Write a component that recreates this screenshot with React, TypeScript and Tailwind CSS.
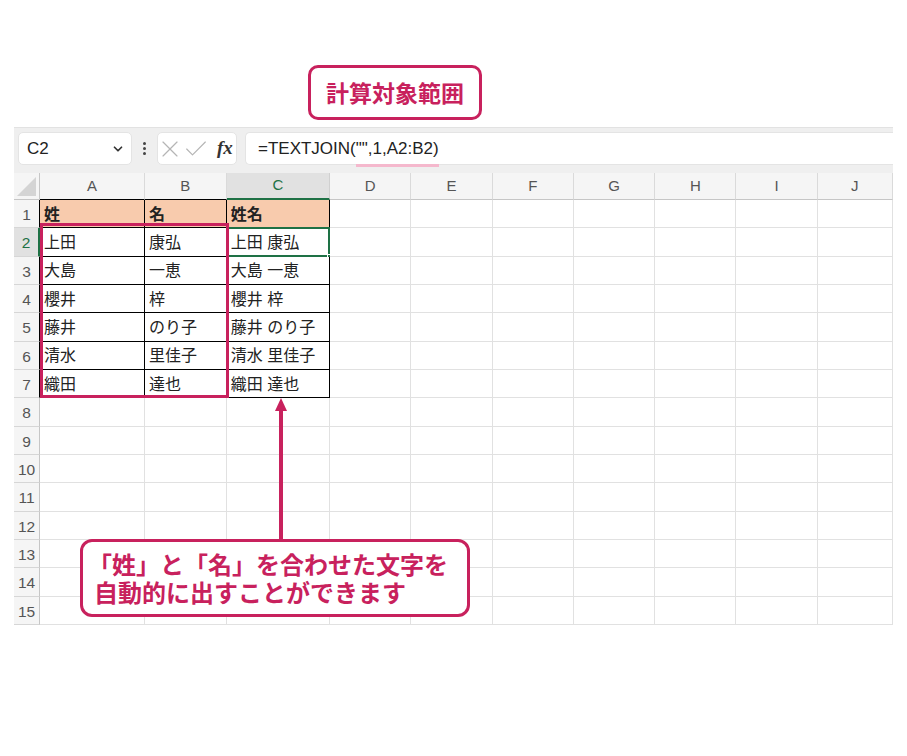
import { Check, ChevronDown, X } from 'lucide-react';

const letters = ['A', 'B', 'C', 'D', 'E', 'F', 'G', 'H', 'I', 'J'];

// A1:C7 の表データ
const table: string[][] = [
  ['姓', '名', '姓名'],
  ['上田', '康弘', '上田 康弘'],
  ['大島', '一恵', '大島 一恵'],
  ['櫻井', '梓', '櫻井 梓'],
  ['藤井', 'のり子', '藤井 のり子'],
  ['清水', '里佳子', '清水 里佳子'],
  ['織田', '達也', '織田 達也'],
];

const rows = Array.from({ length: 15 }, (_, i) => i + 1);

function FormulaBar() {
  return (
    <div className="flex h-[46px] items-start border-t border-[#e2e2e2] bg-[#efefef] pt-[4px] pl-[4px]">
      {/* Name box */}
      <div className="flex h-[33px] w-[114px] items-center justify-between rounded-[5px] border border-[#e4e4e4] bg-white pl-[8px] pr-[6px]">
        <span className="text-[17px] text-[#222]">C2</span>
        <ChevronDown size={14} strokeWidth={3} className="text-[#333]" />
      </div>
      <div className="flex h-[33px] w-[25px] flex-col items-center justify-center gap-[2px]">
        <span className="h-[3px] w-[3px] rounded-full bg-[#444]" />
        <span className="h-[3px] w-[3px] rounded-full bg-[#444]" />
        <span className="h-[3px] w-[3px] rounded-full bg-[#444]" />
      </div>
      {/* Cancel / enter / fx */}
      <div className="flex h-[33px] w-[80px] items-center rounded-[5px] border border-[#e4e4e4] bg-white">
        <X size={28} strokeWidth={1} className="-ml-[2px] shrink-0 text-[#b5b5b5]" />
        <Check size={28} strokeWidth={1} className="-ml-[2px] shrink-0 text-[#b5b5b5]" />
        <span className="ml-[7px] font-['Liberation_Serif',serif] text-[19px] font-bold italic text-[#333]">fx</span>
      </div>
      {/* Formula */}
      <div className="ml-[8px] flex h-[33px] flex-1 items-center rounded-l-[5px] border border-r-0 border-[#e4e4e4] bg-white pl-[12px]">
        <span className="text-[17px] text-[#222]">
          =TEXTJOIN(
          <span className="relative">
            "",1,A2:B2)
            <span className="absolute -bottom-[9px] left-0 right-0 h-[3px] bg-[#f5b8cd]" />
          </span>
        </span>
      </div>
    </div>
  );
}

function Sheet() {
  return (
    <div className="grid grid-cols-[26px_105px_81.7px_103.3px_repeat(6,81.3px)_75px] grid-rows-[27px_repeat(15,28.33px)] text-[#222]">
      {/* corner */}
      <div className="relative border-r border-b border-[#c6c6c6] bg-[#f5f5f5]">
        <svg className="absolute right-[3px] bottom-[3px]" width="19" height="19" viewBox="0 0 19 19">
          <polygon points="19,0 19,19 0,19" fill="#d4d4d4" />
        </svg>
      </div>
      {letters.map((l, c) => (
        <div
          key={l}
          className={
            'flex items-center justify-center text-[15px] ' +
            (c === 2
              ? 'border-r border-r-[#d0d0d0] border-b-2 border-b-[#1e7145] bg-[#e1e1e1] text-[#1e7145]'
              : c < 2
                ? 'border-r border-r-[#dadada] border-b border-b-black bg-[#f5f5f5] text-[#555]'
                : 'border-r border-r-[#dadada] border-b border-b-[#c6c6c6] bg-[#f5f5f5] text-[#555]')
          }
        >
          {l}
        </div>
      ))}
      {rows.map((r) => (
        <RowCells key={r} r={r} />
      ))}
    </div>
  );
}

function RowCells({ r }: { r: number }) {
  return (
    <>
      <div
        className={
          'flex items-center justify-center pt-[2px] text-[15.5px] ' +
          (r === 2
            ? 'border-r-2 border-r-[#1e7145] border-b border-b-[#d6d6d6] bg-[#e1e1e1] text-[#1e7145]'
            : r <= 7
              ? 'border-r border-r-black border-b border-b-[#d6d6d6] bg-[#f5f5f5] text-[#555]'
              : 'border-r border-r-[#c6c6c6] border-b border-b-[#d6d6d6] bg-[#f5f5f5] text-[#555]')
        }
      >
        {r}
      </div>
      {letters.map((l, c) => {
        const inTable = r <= 7 && c <= 2;
        const text = inTable ? table[r - 1][c] : '';
        return (
          <div
            key={l}
            className={
              'relative flex items-center whitespace-nowrap px-[4px] pt-[2px] text-[16px] ' +
              (inTable ? 'border-r border-b border-black ' : 'border-r border-b border-[#e1e1e1] ') +
              (r === 1 && inTable ? 'bg-[#f8cbad] font-bold' : 'bg-white')
            }
          >
            {text}
            {r === 2 && c === 2 && (
              <>
                <span className="absolute -top-[1px] -left-[1px] -right-[1px] -bottom-[1px] border-2 border-[#1e7145]" />
                <span className="absolute -right-[4px] -bottom-[4px] h-[6px] w-[6px] border border-white bg-[#1e7145]" />
              </>
            )}
          </div>
        );
      })}
    </>
  );
}

export default function App() {
  return (
    <div className="relative h-[756px] w-[907px] overflow-hidden bg-white font-['Liberation_Sans','Noto_Sans_CJK_JP',sans-serif]">
      <div className="pt-[65px]">
        {/* 計算対象範囲 */}
        <div className="ml-[308px] flex h-[55px] w-[174px] items-center justify-center rounded-[10px] border-[3px] border-[#c8215d] bg-white">
          <span className="font-['Noto_Sans_CJK_JP',sans-serif] text-[23px] font-bold text-[#c8215d]">計算対象範囲</span>
        </div>

        <div className="mt-[7px] ml-[14px] w-[879px]">
          <FormulaBar />
          <Sheet />
        </div>
      </div>

      {/* A2:B7 highlight */}
      <div className="absolute left-[40px] top-[223px] h-[175px] w-[189px] border-[3px] border-[#c8215d]" />

      {/* arrow */}
      <svg className="absolute left-[273px] top-[398px]" width="16" height="143" viewBox="0 0 16 143">
        <polygon points="8,0 14,13 2,13" fill="#c8215d" />
        <rect x="6" y="11" width="4" height="132" fill="#c8215d" />
      </svg>

      {/* explanation */}
      <div className="absolute left-[80px] top-[539px] h-[78px] w-[390px] rounded-[12px] border-[3px] border-[#c8215d] bg-white pt-[8px] pl-[11px] font-['Noto_Sans_CJK_JP',sans-serif] text-[24px] font-bold leading-[28px] text-[#c8215d]">
        <div className="-ml-[6px]">「姓」と「名」を合わせた文字を</div>
        <div>自動的に出すことができます</div>
      </div>
    </div>
  );
}
